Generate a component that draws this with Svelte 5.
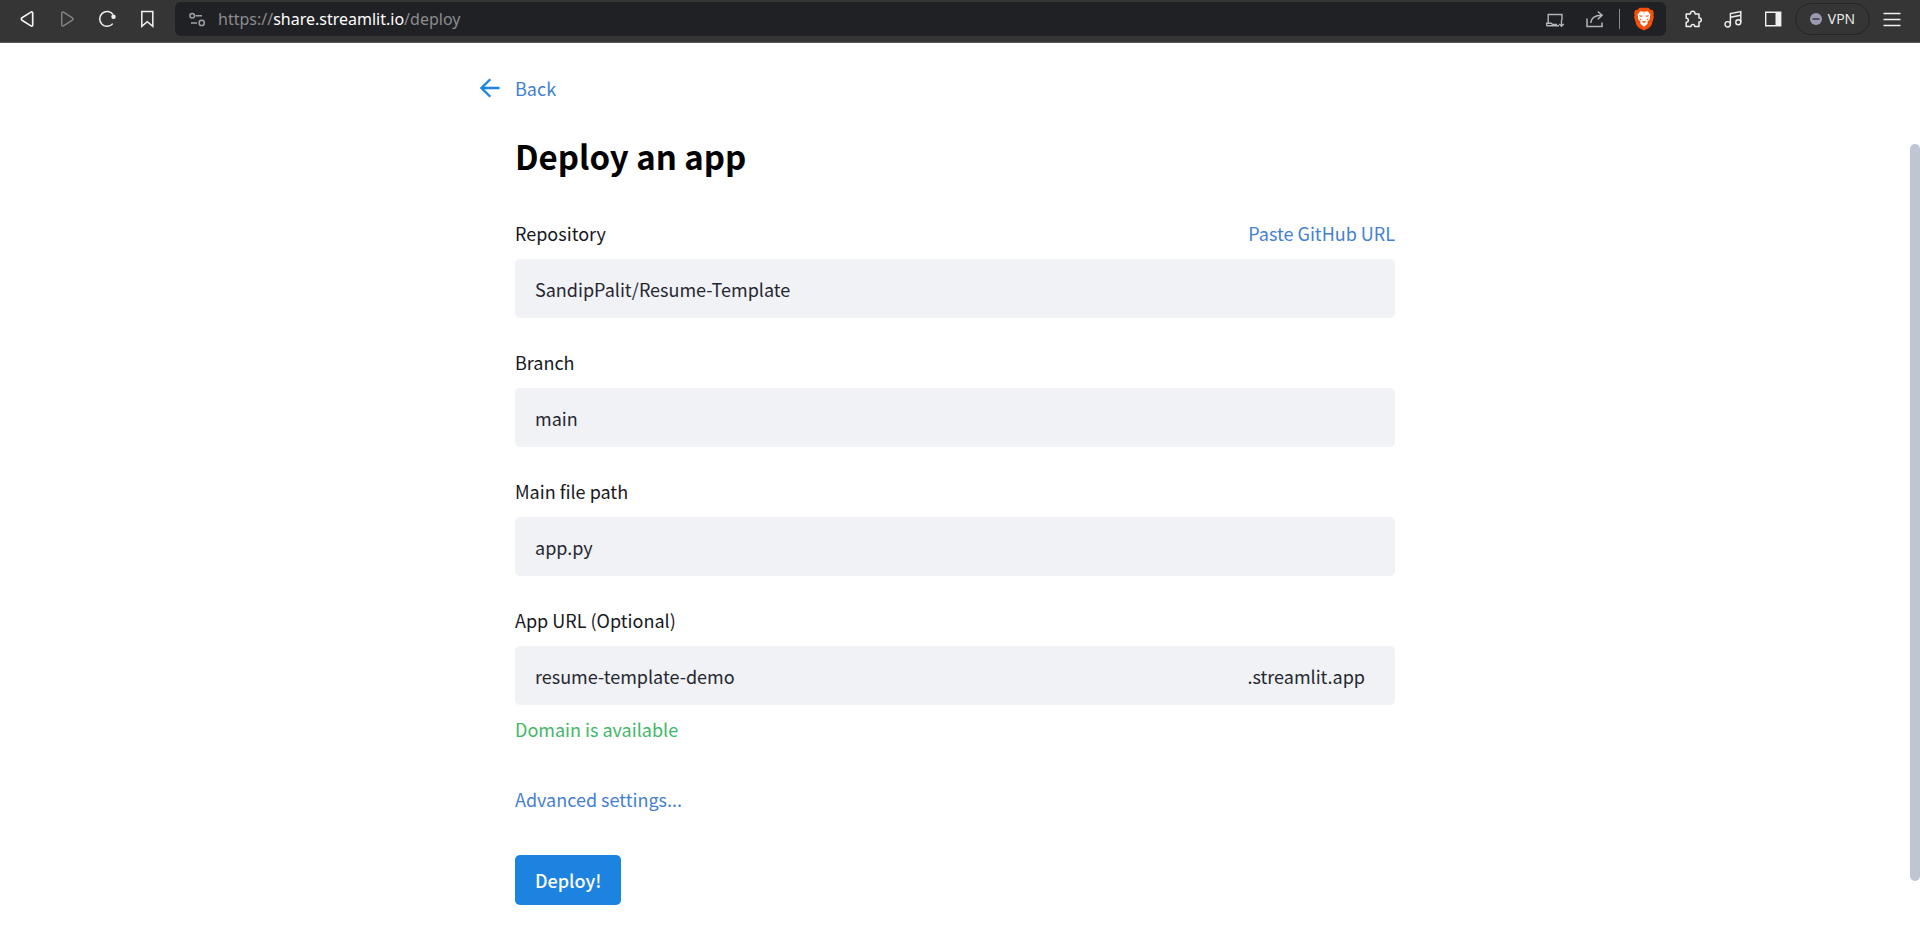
<script>
  let repository = $state('SandipPalit/Resume-Template');
  let branch = $state('main');
  let filePath = $state('app.py');
  let subdomain = $state('resume-template-demo');
</script>

<div class="window">
  <header class="toolbar">
    <button class="tool" aria-label="Go back">
      <svg viewBox="0 0 20 20"><path d="M15.7 4.1v11.8c0 1-1 1.5-1.8 1L5 11.2c-.9-.6-.9-1.8 0-2.4l8.9-5.7c.8-.5 1.8 0 1.8 1z" stroke-width="1.7" /></svg>
    </button>
    <button class="tool dim" aria-label="Go forward">
      <svg viewBox="0 0 20 20"><path d="M4.7 4.1v11.8c0 1 1 1.5 1.8 1l8.900-5.700c.9-.6.9-1.800 0-2.400L6.500 3.100c-.8-.5-1.800 0-1.800 1z" stroke-width="1.400" /></svg>
    </button>
    <button class="tool" aria-label="Reload">
      <svg viewBox="0 0 20 20"><path d="M15.800 14.600A7.400 7.400 0 1 1 16 5.500" stroke-width="1.500" /><circle cx="16.500" cy="7.800" r="2.200" class="solid" /></svg>
    </button>
    <button class="tool" aria-label="Bookmark">
      <svg viewBox="0 0 20 20"><path d="M4.800 2.500h11v14.800L10.300 12.700 4.800 17.300z" stroke-width="1.500" /></svg>
    </button>

    <div class="address">
      <button class="site" aria-label="Site information">
        <svg viewBox="0 0 20 20" stroke-width="1.500"><circle cx="5.200" cy="6.700" r="2.300" /><path d="M8.500 6.700h6.500M4 13.900h6" /><circle cx="14.700" cy="13.900" r="2.600" /></svg>
      </button>
      <span class="url">https://<b>share.streamlit.io</b>/deploy</span>
      <button class="tool muted" aria-label="Install app">
        <svg viewBox="0 0 20 20" stroke-width="1.400"><path d="M3.200 14V5.500h13.800v5.500M1.500 16.700h12.500M1.700 16.700v-2.400h4.500l1.300 1.200h4.500M16.500 11v6M14.200 15l2.300 2.300 2.300-2.300" /></svg>
      </button>
      <button class="tool muted" aria-label="Share">
        <svg viewBox="0 0 20 20" stroke-width="1.500"><path d="M2 9.500v8h15v-4M5.800 14c.2-5 3.300-7.800 11-7.800M12.800 2.500l4.300 3.700-4.300 4" /></svg>
      </button>
      <span class="divider"></span>
      <button class="shield" aria-label="Brave Shields">
        <svg viewBox="0 0 22 24" stroke="none">
          <path fill="#f4500b" d="M6.500.8h9l1.900 2 2.200.3 1.300 3.200-.5 1.800.5 2-2.500 8.500-2.400 2.500-5 2.500-5-2.500-2.400-2.500L1.100 10.100l.5-2-.5-1.800 1.300-3.200 2.200-.3z" />
          <path fill="#fff" d="m7.200 4.200 3.800.5 3.800-.5 2.700 3.500-.6 2.300.1 2-2.500 2.700.1 2-3.600 3-3.600-3 .1-2L5 12l.1-2-.6-2.300z" />
          <path fill="#f4500b" d="m6.200 8.200 3.300.6-.5 1-2.300-.4zM15.800 8.200l-3.300.6.5 1 2.300-.4zM6 10.800l2.400 1.500-.4 1.200zM16 10.800l-2.400 1.500.4 1.200zM10.700 5.500h.6l-.1 1.800h-.4zM8.700 14.600l2.300-.7 2.300.7-2.300 1.300z" />
        </svg>
      </button>
    </div>

    <button class="tool" aria-label="Extensions">
      <svg viewBox="0 0 20 20"><path d="M3.200 4.900h4.200c-.2-1.700.8-2.700 2.300-2.700s2.500 1 2.300 2.700h4v4c1.500-.1 2.300.7 2.300 2s-.8 2.100-2.300 2v4.500h-4.300c.1-1.300-.6-2-1.800-2s-1.900.7-1.800 2H3.200v-4.200c1.400.1 2.100-.7 2.100-2s-.7-2.100-2.100-2z" stroke-width="1.500" stroke-linejoin="round" /></svg>
    </button>
    <button class="tool" aria-label="Playlist">
      <svg viewBox="0 0 20 20" stroke-width="1.400"><circle cx="4.700" cy="15.300" r="2.700" /><circle cx="15.300" cy="13.300" r="2.500" /><path d="M7.400 15.300V4.500L17.800 2.600v10.700M7.400 8.200l10.400-1.900" /></svg>
    </button>
    <button class="tool" aria-label="Sidebar">
      <svg viewBox="0 0 20 20"><path d="M2.700 3.200h15v13.600h-15z" stroke-width="1.400" /><path d="M12.500 3h5.500v14h-5.500z" class="solid" /></svg>
    </button>
    <button class="vpn">
      <svg viewBox="0 0 12 12" stroke="none"><circle cx="6" cy="6" r="6" fill="#9a9bb0" /><path fill="#3c3c4c" d="M2.500 5.200h7v1.600h-7z" /></svg>
      VPN
    </button>
    <button class="tool" aria-label="Menu">
      <svg viewBox="0 0 20 20"><path d="M1.500 4.500h17M1.500 10.500h17M1.500 16.500h17" stroke-width="1.500" /></svg>
    </button>
  </header>

  <div class="viewport">
    <main>
      <a class="back" href="#back">
        <svg viewBox="0 0 20 20"><path d="M19.500 10H1.700M10.300 1.200 1.500 10l8.800 8.800" stroke-width="2.300" /></svg>
        Back
      </a>
      <h1>Deploy an app</h1>

      <form onsubmit={(e) => e.preventDefault()}>
        <div class="field">
          <div class="caption">
            <label for="repository">Repository</label>
            <a href="#paste">Paste GitHub URL</a>
          </div>
          <div class="box"><input id="repository" bind:value={repository} /></div>
        </div>
        <div class="field">
          <label for="branch">Branch</label>
          <div class="box"><input id="branch" bind:value={branch} /></div>
        </div>
        <div class="field">
          <label for="path">Main file path</label>
          <div class="box"><input id="path" bind:value={filePath} /></div>
        </div>
        <div class="field">
          <label for="subdomain">App URL (Optional)</label>
          <div class="box">
            <input id="subdomain" bind:value={subdomain} />
            <span class="suffix">.streamlit.app</span>
          </div>
          <p class="status">Domain is available</p>
        </div>
        <a class="advanced" href="#advanced">Advanced settings...</a>
        <button class="deploy" type="submit">Deploy!</button>
      </form>
    </main>
    <div class="scrollbar"><div class="thumb"></div></div>
  </div>
</div>

<style>
  :global(body) {
    margin: 0;
    background: #fff;
  }
  .window {
    display: flex;
    flex-direction: column;
    min-height: 100vh;
    font-family: 'Noto Sans CJK SC', 'Noto Sans', sans-serif;
    font-size: 18px;
    line-height: 24px;
    color: #17181d;
  }
  button,
  input {
    font: inherit;
    color: inherit;
    border: 0;
    padding: 0;
    margin: 0;
    background: none;
  }
  button {
    cursor: pointer;
  }
  svg {
    display: block;
    flex: none;
    fill: none;
    stroke: currentColor;
  }
  svg[stroke='none'] {
    stroke: none;
  }
  .solid {
    fill: currentColor;
    stroke: none;
  }

  .toolbar {
    display: flex;
    align-items: center;
    height: 36px;
    padding: 1px 8px 5px 7px;
    border-bottom: 1px solid #5c5b5b;
    background: #353535;
    color: #f1f1f1;
  }
  .tool {
    display: flex;
    justify-content: center;
    flex: none;
    width: 40px;
  }
  .tool svg,
  .site svg {
    width: 20px;
    height: 20px;
  }
  .dim {
    color: #858585;
  }
  .muted {
    color: #b4b5b7;
  }
  .address {
    display: flex;
    align-items: center;
    flex: 1;
    min-width: 0;
    height: 34px;
    margin: 0 7px 0 8px;
    padding: 0 11px 0 12px;
    box-sizing: border-box;
    border-radius: 6px;
    background: #202124;
  }
  .site {
    margin-right: 11px;
    color: #a0a1a3;
  }
  .url {
    flex: 1;
    min-width: 0;
    overflow: hidden;
    white-space: nowrap;
    font-family: 'Noto Sans', 'Open Sans', sans-serif;
    font-size: 16px;
    color: #8b8c8e;
  }
  .url b {
    font-weight: 400;
    color: #fff;
  }
  .divider {
    width: 1px;
    height: 20px;
    margin: 0 13px 0 4px;
    background: #8a8b8d;
  }
  .shield svg {
    width: 22px;
    height: 24px;
  }
  .vpn {
    display: flex;
    align-items: center;
    justify-content: center;
    gap: 6px;
    width: 75px;
    height: 32px;
    margin: 0 2px;
    box-sizing: border-box;
    border: 1px solid #242424;
    border-radius: 16px;
    font-family: 'Open Sans', 'Noto Sans', sans-serif;
    font-size: 14px;
  }
  .vpn svg {
    width: 12px;
    height: 12px;
  }

  .viewport {
    display: flex;
    flex: 1;
  }
  main {
    flex: 1;
    max-width: 880px;
    margin: 0 auto;
    padding-bottom: 22px;
  }
  a {
    color: #4580d0;
    text-decoration: none;
  }
  .back {
    display: flex;
    align-items: center;
    gap: 15px;
    width: max-content;
    margin: 33px 0 0 -35px;
  }
  .back svg {
    width: 20px;
    height: 20px;
    color: #1c83e1;
  }
  h1 {
    margin: 32px 0 0;
    font-size: 33px;
    line-height: 48px;
    font-weight: 600;
    color: #000;
  }
  form {
    display: flex;
    flex-direction: column;
    align-items: flex-start;
    margin-top: 41px;
  }
  .field {
    display: flex;
    flex-direction: column;
    align-self: stretch;
    margin-bottom: 32px;
  }
  .caption {
    display: flex;
    justify-content: space-between;
  }
  .box {
    display: flex;
    align-items: center;
    height: 59px;
    margin-top: 14px;
    padding: 0 30px 0 20px;
    border-radius: 5px;
    background: #f0f2f6;
    color: #262730;
  }
  input {
    flex: 1;
    min-width: 0;
    height: 100%;
    outline: none;
  }
  .status {
    margin: 12px 0 0;
    color: #3fb868;
  }
  .advanced {
    margin-top: 14px;
  }
  .deploy {
    height: 50px;
    margin-top: 44px;
    padding: 0 20px;
    border-radius: 5px;
    background: #1c83e1;
    color: #fff;
    font-weight: 500;
  }
  .scrollbar {
    display: flex;
    width: 10px;
    padding: 101px 0 46px;
  }
  .thumb {
    flex: 1;
    border-radius: 5px;
    background: #bfc5d3;
  }
</style>
